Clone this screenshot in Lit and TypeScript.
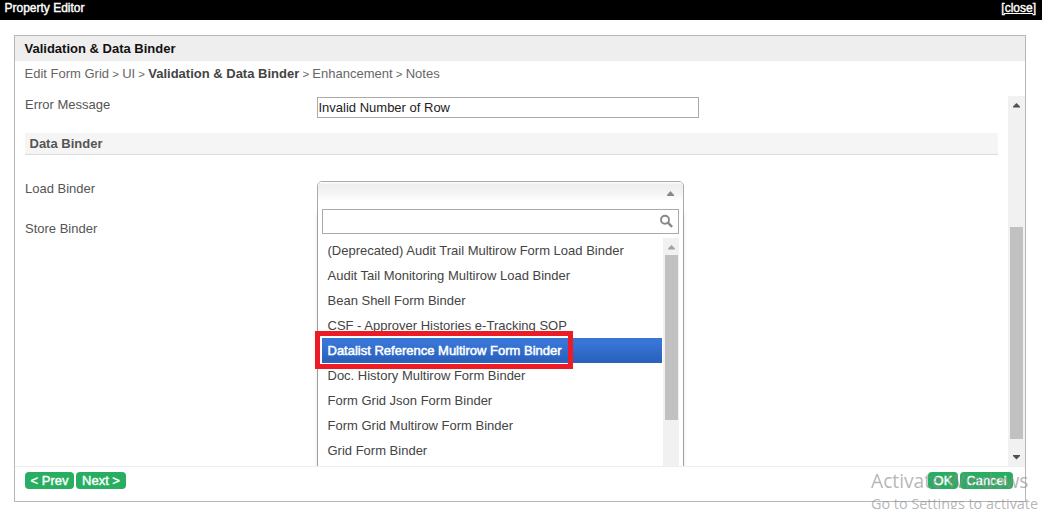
import { LitElement, html, css, svg } from "lit";
import { customElement, property } from "lit/decorators.js";
import { classMap } from "lit/directives/class-map.js";

const BINDERS = [
  "(Deprecated) Audit Trail Multirow Form Load Binder",
  "Audit Tail Monitoring Multirow Load Binder",
  "Bean Shell Form Binder",
  "CSF - Approver Histories e-Tracking SOP",
  "Datalist Reference Multirow Form Binder",
  "Doc. History Multirow Form Binder",
  "Form Grid Json Form Binder",
  "Form Grid Multirow Form Binder",
  "Grid Form Binder",
];

const PAGES = ["Edit Form Grid", "UI", "Validation & Data Binder", "Enhancement", "Notes"];

const upArrow = svg`<path d="M0 4.5h7v-1L3.5 0 0 3.5z"/>`;
const downArrow = svg`<path d="M0 0h7v1L3.5 4.5 0 1z"/>`;

@customElement("binder-select")
export class BinderSelect extends LitElement {
  @property() selected = BINDERS[4];

  static styles = css`
    :host { display: block; width: 367px; box-sizing: border-box; }
    .select {
      box-sizing: border-box; width: 367px; height: 330px;
      border: 1px solid #aaa; border-radius: 5px 5px 0 0; background: #fff;
      display: flex; flex-direction: column;
    }
    .head {
      height: 23px; border-radius: 4px 4px 0 0; margin-bottom: 4px;
      background: linear-gradient(#fff 0, #eee 12%, #f4f4f4 50%, #fff 85%);
      display: flex; justify-content: flex-end; align-items: center; padding-right: 9px;
    }
    .head svg { fill: #888; width: 7px; height: 5px; display: block; }
    .drop { padding: 0 4px; flex: 1; box-shadow: 0 4px 5px rgba(0, 0, 0, 0.15); display: flex; flex-direction: column; }
    .search {
      box-sizing: border-box; height: 25px; border: 1px solid #aaa; background: #fff;
      display: flex; align-items: center; justify-content: flex-end; padding-right: 4px;
      margin-bottom: 4px; flex: none;
    }
    .search svg { display: block; }
    .results { display: flex; flex: 1; }
    .items { flex: 1; margin: 0; padding: 0; list-style: none; position: relative; }
    .item {
      box-sizing: border-box; height: 25px; padding-left: 5.5px; line-height: 25px;
      color: #444; font-size: 13px; white-space: nowrap;
    }
    .item.on {
      color: #fff; -webkit-text-stroke: 0.5px #fff;
      background: linear-gradient(#3875d7 20%, #2a62bc 90%);
    }
    .mark {
      position: absolute; left: -7px; top: 93px; width: 258px; height: 38px;
      box-sizing: border-box; border: 5px solid #ed1c24;
    }
    .mark::after { content: ""; display: block; height: 100%; box-sizing: border-box; border: 2px solid #fff; border-right: 0; border-bottom-width: 1px; }
    .bar { width: 16px; margin-left: 1px; background: #f1f1f1; display: flex; flex-direction: column; align-items: center; }
    .bar svg { fill: #a3a3a3; width: 7px; height: 5px; margin: 7px 0 5px; display: block; }
    .thumb { width: 13px; height: 165px; background: #c1c1c1; }
  `;

  render() {
    return html`<div class="select">
      <div class="head"><svg viewBox="0 0 7 5"><path d="M0 5V4L3.5 0 7 4v1z" /></svg></div>
      <div class="drop">
        <div class="search">
          <svg width="15" height="15" viewBox="0 0 15 15" fill="none" stroke="#888">
            <circle cx="6" cy="5.8" r="4" stroke-width="1.9" />
            <path d="M8.9 8.6l4.2 4.2" stroke-width="2.4" />
          </svg>
        </div>
        <div class="results">
          <ul class="items">
            ${BINDERS.map((b) => html`<li class=${classMap({ item: true, on: b === this.selected })}>${b}</li>`)}
            <div class="mark"></div>
          </ul>
          <div class="bar"><svg viewBox="0 0 7 5">${upArrow}</svg><div class="thumb"></div></div>
        </div>
      </div>
    </div>`;
  }
}

@customElement("app-root")
export class AppRoot extends LitElement {
  static styles = css`
    :host {
      display: block; position: relative; width: 1042px; height: 509px; overflow: hidden;
      background: #fff; color: #555; font: 13px/16px "Liberation Sans", Arial, sans-serif;
    }
    .top {
      height: 20px; box-sizing: border-box; background: #000; color: #fff;
      -webkit-text-stroke: 0.4px #fff; font-size: 12px;
      display: flex; justify-content: space-between; padding: 0 6px 0 4.5px;
    }
    .close { text-decoration: underline; }
    .panel {
      box-sizing: border-box; width: 1012px; height: 467px; margin: 15px 0 0 14px;
      border: 1px solid #b7b7b7; display: flex; flex-direction: column;
    }
    .title {
      height: 25px; line-height: 25px; background: #eee; color: #111; font-weight: bold;
      padding-left: 9.5px;
    }
    .crumbs { height: 35px; line-height: 25px; padding-left: 9.5px; color: #666; white-space: nowrap; }
    .crumbs b { color: #444; }
    .sep { font-size: 11.5px; white-space: pre; }
    .scroll { height: 370px; display: flex; overflow: hidden; }
    .form { width: 973px; padding-left: 10px; }
    .row { display: flex; height: 37px; }
    .row.load { height: 40px; }
    .label { width: 292px; flex: none; }
    .row.error .label { padding-top: 1px; }
    .input {
      box-sizing: border-box; width: 382px; height: 21px; margin-top: 1px; border: 1px solid #aaa;
      color: #222; line-height: 19px; padding-left: 0.5px;
    }
    .section {
      height: 21px; line-height: 21px; background: #f5f5f5; border-bottom: 1px solid #ddd;
      padding-left: 4.5px; font-weight: bold; color: #555; margin-bottom: 26px;
    }
    .bar {
      width: 17px; margin-left: auto; background: #f1f1f1; display: flex;
      flex-direction: column; align-items: center;
    }
    .bar svg { fill: #505050; width: 7px; height: 5px; display: block; margin-top: 7px; flex: none; }
    .bar svg.down { margin-top: 16px; }
    .thumb { width: 13px; height: 212px; flex: none; margin-top: 119px; background: #c1c1c1; }
    .foot { border-top: 1px solid #eee; padding: 5px 12px 0 10px; display: flex; gap: 2px; }
    .btn {
      height: 17px; line-height: 17px; border-radius: 4px; background: #27ae60; color: #fff;
      -webkit-text-stroke: 0.4px #fff; text-align: center; box-sizing: border-box;
    }
    .prev { width: 49px; }
    .next { width: 50px; }
    .ok { width: 30px; margin-left: auto; }
    .cancel { width: 53px; }
    .mark {
      position: absolute; left: 871px; top: 469px; color: rgba(140, 140, 140, 0.65);
      font-family: "Open Sans", "Noto Sans", sans-serif; white-space: nowrap;
    }
    .big { font-size: 19.2px; line-height: 24px; }
    .small { font-size: 14.4px; line-height: 21px; }
  `;

  render() {
    return html`
      <div class="top"><span class="heading">Property Editor</span><span class="close">[close]</span></div>
      <div class="panel">
        <div class="title">Validation &amp; Data Binder</div>
        <div class="crumbs">
          ${PAGES.map(
            (p, i) => html`${i ? html`<span class="sep"> &gt; </span>` : ""}${i === 2 ? html`<b>${p}</b>` : html`<span>${p}</span>`}`
          )}
        </div>
        <div class="scroll">
          <div class="form">
            <div class="row error"><div class="label">Error Message</div><div class="input">Invalid Number of Row</div></div>
            <div class="section">Data Binder</div>
            <div class="row load"><div class="label">Load Binder</div><binder-select></binder-select></div>
            <div class="row"><div class="label">Store Binder</div></div>
          </div>
          <div class="bar">
            <svg viewBox="0 0 7 5">${upArrow}</svg><div class="thumb"></div><svg class="down" viewBox="0 0 7 5">${downArrow}</svg>
          </div>
        </div>
        <div class="foot">
          <div class="btn prev">&lt; Prev</div>
          <div class="btn next">Next &gt;</div>
          <div class="btn ok">OK</div>
          <div class="btn cancel">Cancel</div>
        </div>
      </div>
      <div class="mark"><div class="big">Activate Windows</div><div class="small">Go to Settings to activate</div></div>
    `;
  }
}
